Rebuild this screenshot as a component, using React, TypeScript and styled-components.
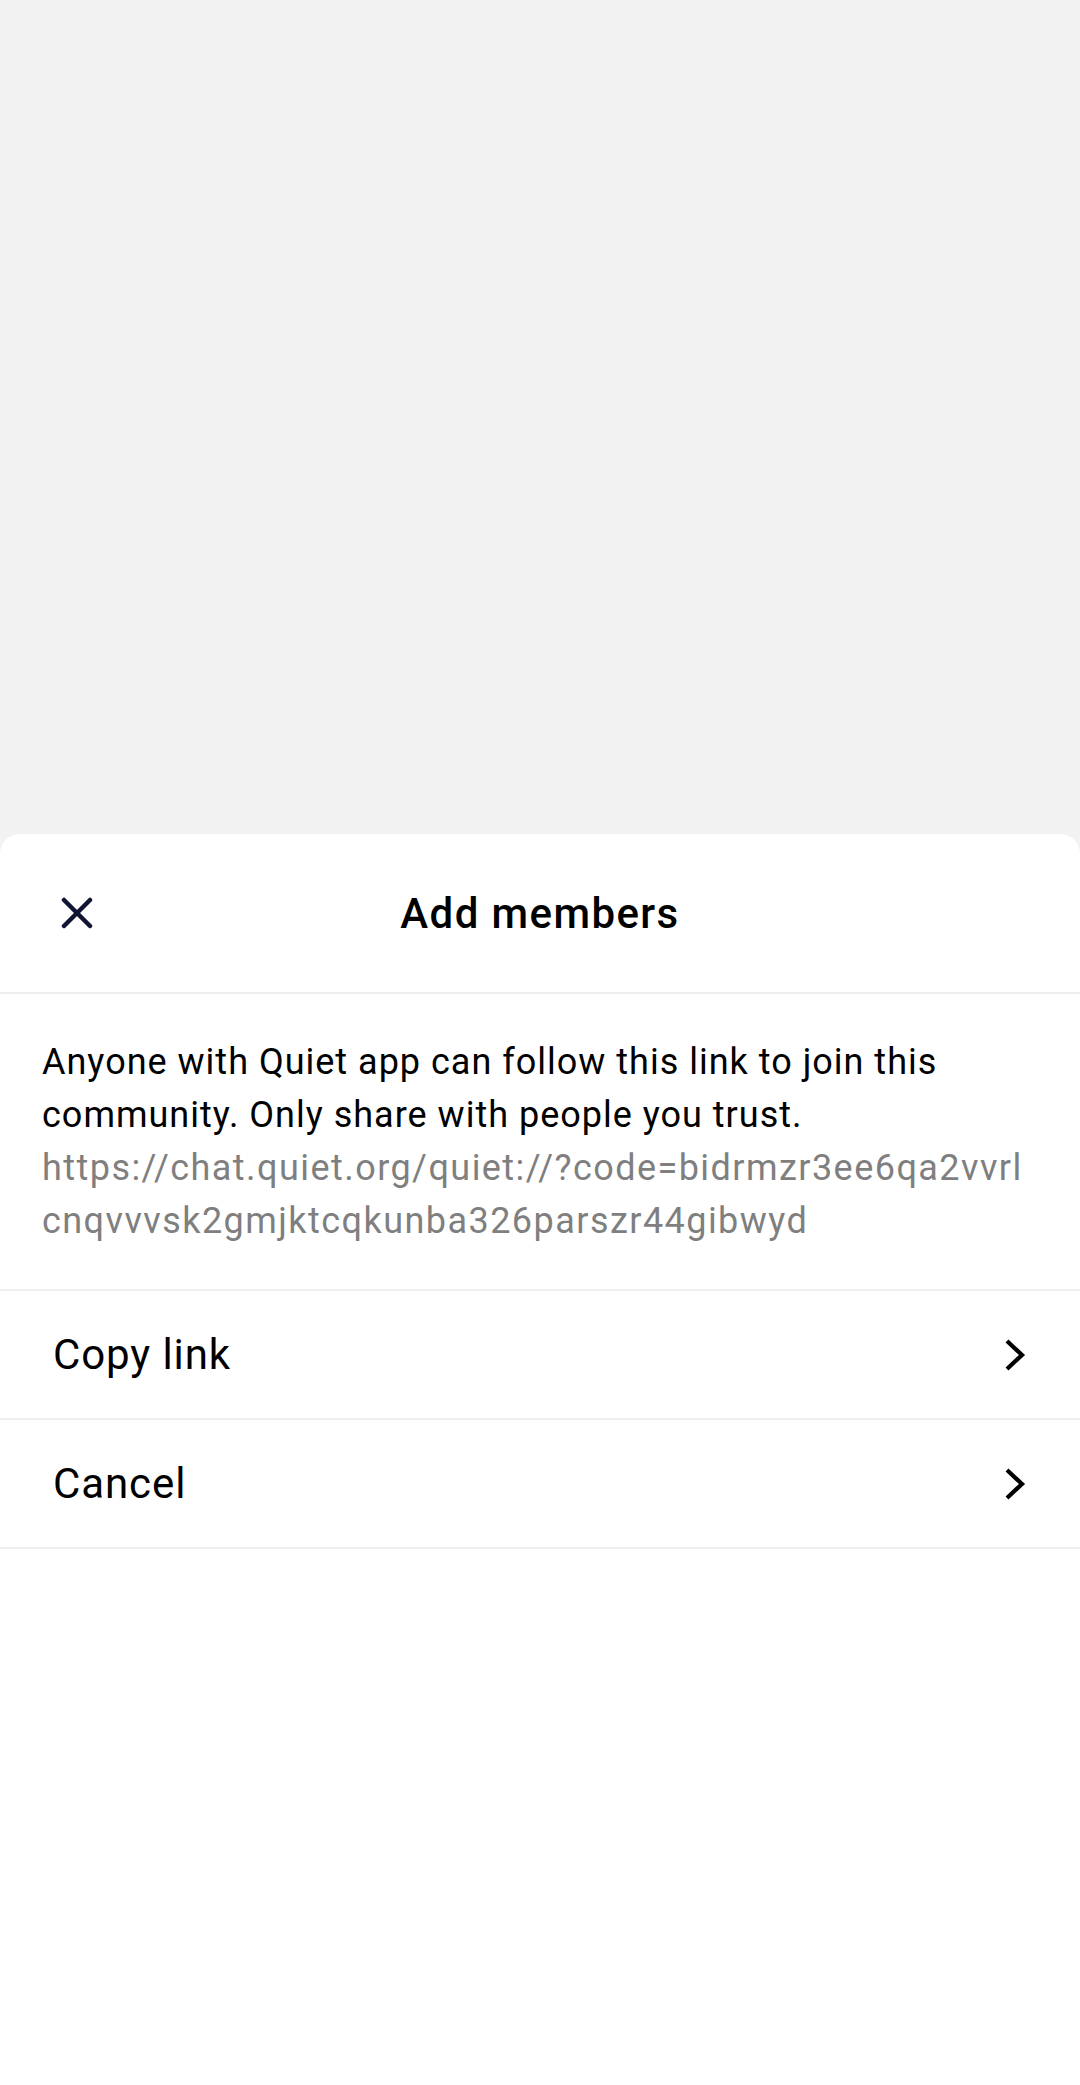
import React from "react";
import styled, { createGlobalStyle } from "styled-components";

const Global = createGlobalStyle`
  html, body { margin: 0; padding: 0; background: #f2f2f2; }
  body { font-family: Roboto, "Noto Sans", sans-serif; }
  #root { min-height: 2085px; display: flex; flex-direction: column; }
`;

const Backdrop = styled.div`
  height: 834px;
  background: #f2f2f2;
  flex-shrink: 0;
`;

const Sheet = styled.div`
  flex: 1;
  background: #ffffff;
  border-radius: 20px 20px 0 0;
  display: flex;
  flex-direction: column;
`;

const Header = styled.div`
  height: 158px;
  display: grid;
  grid-template-columns: 154px 1fr 154px;
  align-items: center;
  border-bottom: 2px solid #efefef;
`;

const CloseButton = styled.button`
  border: none;
  background: none;
  padding: 0;
  margin-left: 61px;
  width: 32px;
  height: 32px;
  display: flex;
  cursor: pointer;
`;

const Title = styled.h1`
  margin: 0;
  text-align: center;
  font-size: 42px;
  font-weight: 500;
  color: #000;
  letter-spacing: 1.4px;
`;

const Body = styled.div`
  padding: 42px 42px 41px 42px;
  border-bottom: 2px solid #efefef;
`;

const Paragraph = styled.p`
  margin: 0;
  font-size: 36px;
  line-height: 53px;
  color: #000;
  letter-spacing: 1px;
`;

const Link = styled.span`
  display: block;
  font-size: 36px;
  line-height: 53px;
  color: #7f7f7f;
  white-space: nowrap;
  letter-spacing: 1.45px;
`;

const Row = styled.button`
  height: 129px;
  border: none;
  border-bottom: 2px solid #efefef;
  background: #fff;
  padding: 0 54px 0 53px;
  display: flex;
  align-items: center;
  justify-content: space-between;
  font-family: inherit;
  cursor: pointer;
`;

const RowLabel = styled.span`
  font-size: 42px;
  color: #000;
  letter-spacing: 0.9px;
`;

const Chevron = () => (
  <svg width="22" height="32" viewBox="0 0 22 32">
    <polyline points="3,2 18,16 3,30" fill="none" stroke="#000" strokeWidth="4.2" strokeLinecap="butt" strokeLinejoin="miter" />
  </svg>
);

const CloseIcon = () => (
  <svg width="32" height="32" viewBox="0 0 32 32">
    <path d="M3 3 L29 29 M29 3 L3 29" stroke="#0f1532" strokeWidth="4.5" strokeLinecap="round" />
  </svg>
);

export default function App() {
  return (
    <>
      <Global />
      <Backdrop />
      <Sheet>
        <Header>
          <CloseButton aria-label="Close">
            <CloseIcon />
          </CloseButton>
          <Title>Add members</Title>
          <div />
        </Header>
        <Body>
          <Paragraph>
            Anyone with Quiet app can follow this link to join this community. Only share with people you trust.
          </Paragraph>
          <Link>https://chat.quiet.org/quiet://?code=bidrmzr3ee6qa2vvrl</Link>
          <Link>cnqvvvsk2gmjktcqkunba326parszr44gibwyd</Link>
        </Body>
        <Row>
          <RowLabel>Copy link</RowLabel>
          <Chevron />
        </Row>
        <Row>
          <RowLabel>Cancel</RowLabel>
          <Chevron />
        </Row>
      </Sheet>
    </>
  );
}
